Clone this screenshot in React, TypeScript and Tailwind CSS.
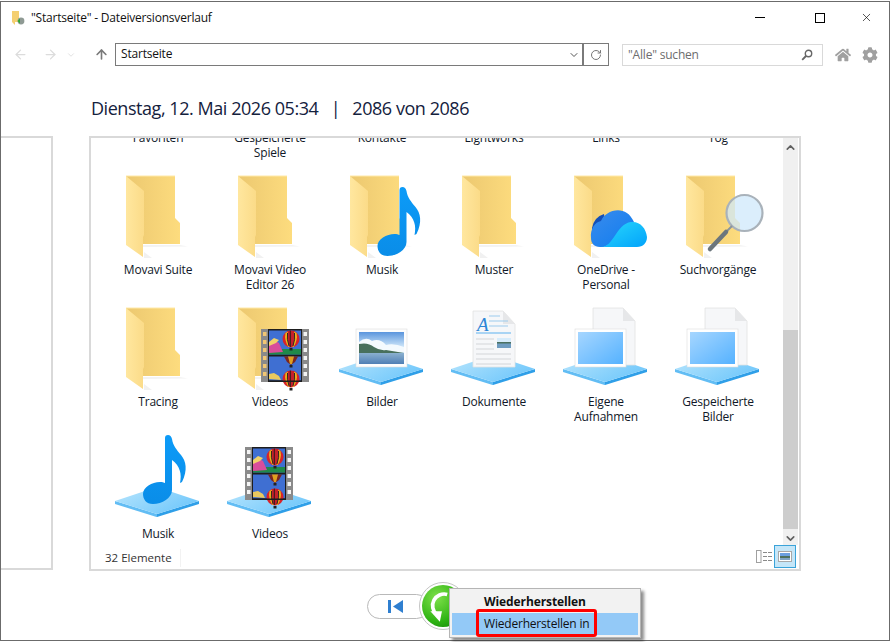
import { ArrowLeft, ArrowRight, ArrowUp, ChevronDown, ChevronUp, RotateCw, X } from "lucide-react";
import { FaCog, FaHome } from "react-icons/fa";
import type { ReactNode } from "react";

const font = "font-['Open_Sans',sans-serif]";

function SvgDefs() {
  return (
    <svg className="absolute h-0 w-0">
      <defs>
        <linearGradient id="folderBack" x1="0" x2="1" y1="0" y2="0">
          <stop offset="0" stopColor="#ecc870" />
          <stop offset="1" stopColor="#fddc7e" />
        </linearGradient>
        <linearGradient id="folderFront" x1="0" x2="1" y1="0" y2="0">
          <stop offset="0" stopColor="#ffe79f" />
          <stop offset="1" stopColor="#fbdb88" />
        </linearGradient>
        <linearGradient id="plate" x1="0" x2="1" y1="0" y2="0.6">
          <stop offset="0" stopColor="#b9e6fd" />
          <stop offset="1" stopColor="#72c8fb" />
        </linearGradient>
        <linearGradient id="note" x1="0" x2="0" y1="0" y2="1">
          <stop offset="0" stopColor="#0c9bf8" />
          <stop offset="1" stopColor="#0a8de8" />
        </linearGradient>
        <linearGradient id="tile" x1="0" x2="1" y1="0" y2="1">
          <stop offset="0" stopColor="#a6d6ff" />
          <stop offset="1" stopColor="#55b2ff" />
        </linearGradient>
        <linearGradient id="cloudMain" x1="0" x2="1" y1="0" y2="1">
          <stop offset="0" stopColor="#3a8cec" />
          <stop offset="1" stopColor="#0f7cf0" />
        </linearGradient>
        <linearGradient id="cloudRight" x1="0" x2="1" y1="0" y2="1">
          <stop offset="0" stopColor="#2ad8fb" />
          <stop offset="1" stopColor="#02a3fb" />
        </linearGradient>
        <linearGradient id="photoSky" x1="0" x2="0" y1="0" y2="1">
          <stop offset="0" stopColor="#5a95dd" />
          <stop offset="0.5" stopColor="#d7ecfb" />
          <stop offset="1" stopColor="#d7ecfb" />
        </linearGradient>
        <linearGradient id="photoWater" x1="0" x2="0" y1="0" y2="1">
          <stop offset="0" stopColor="#8bb0cf" />
          <stop offset="1" stopColor="#4f7fb5" />
        </linearGradient>
        <radialGradient id="greenBall" cx="0.35" cy="0.3" r="0.8">
          <stop offset="0" stopColor="#7fe04a" />
          <stop offset="0.7" stopColor="#2fb414" />
          <stop offset="1" stopColor="#1c900c" />
        </radialGradient>
      </defs>
    </svg>
  );
}

function Folder() {
  return (
    <>
      <path d="M33 73 L70 73 L78 74.5 L33 75Z" fill="#f3f3f3" />
      <path d="M16 4 L65 4 L65 46 L70 51 L70 72 L33 72 Z" fill="url(#folderBack)" />
      <path d="M16 4 L65 4" stroke="#ffe9a8" strokeWidth="1" />
      <path d="M16 4 L34 19 L34 63 L33 65 L33 85 L16 73 Z" fill="url(#folderFront)" />
      <path d="M34 86 L42 86 L34 80Z" fill="#f1f1f1" />
    </>
  );
}

function Plate() {
  return (
    <>
      <path d="M5 65 L47 78 L47 81 Q47 81 45 80.5 L5 68 Z" fill="#62bdf4" />
      <path d="M89 65 L47 78 L47 81 L89 68 Z" fill="#2f9fe8" />
      <path d="M5 65 L47 51 L89 65 L47 78 Z" fill="url(#plate)" />
    </>
  );
}

function Note({ dx = 0, dy = 0 }: { dx?: number; dy?: number }) {
  return (
    <path
      transform={`translate(${dx} ${dy})`}
      fill="url(#note)"
      d="M55 2 Q55 -1 58 -1 Q61 -1 62 3 C63 10 67 14 71 19 C76 25 78 34 72 46 L70 47 C72 38 70 30 62 24 L62 54 C62 62 52 68 43 68 C36 68 33 63 33 58 C33 51 42 46 50 46 C52 46 54 46.5 55 47 Z"
    />
  );
}

function Balloon({ x, y }: { x: number; y: number }) {
  return (
    <g transform={`translate(${x} ${y})`}>
      <ellipse cx="0" cy="0" rx="8.5" ry="8.5" fill="#d8232a" />
      <path d="M-5.5 -6 Q-7 1 -2.5 8 L2.5 8 Q7 1 5.5 -6 Q0 -10 -5.5 -6Z" fill="#f0b81c" />
      <path d="M-3 -8 Q-4.5 0 -1.5 8 L1.5 8 Q4.5 0 3 -8Z" fill="#c5202a" />
      <path d="M-0.7 -8.5 V8 M-3.5 -6 Q-4.5 0 -2 7 M3.5 -6 Q4.5 0 2 7" stroke="#1b1b1b" strokeWidth="0.9" fill="none" />
      <rect x="-1.5" y="9" width="3" height="2.5" fill="#222" />
    </g>
  );
}

function Film({ x, y }: { x: number; y: number }) {
  const holes = [3, 11, 19, 27, 35, 43];
  return (
    <g transform={`translate(${x} ${y})`}>
      <rect x="0" y="0" width="48" height="53" fill="#8a8a8a" />
      {holes.map((h) => (
        <g key={h}>
          <rect x="2" y={h} width="3.5" height="4" fill={x > 30 ? "#f0c674" : "#f4f4f4"} />
          <rect x="42.5" y={h} width="3.5" height="4" fill="#f4f4f4" />
        </g>
      ))}
      <rect x="7" y="0" width="34" height="53" fill="#1d1d1d" />
      <rect x="8" y="1.5" width="32" height="24" fill="#3f6fd2" />
      <rect x="8" y="20" width="32" height="5.5" fill="#1f8a4a" />
      <path d="M8 17 L13 11 L18 14 L22 23 L8 24Z" fill="#d84d9b" />
      <path d="M8 13 L13 9 L18 11 L15 14 L8 17Z" fill="#f0d26a" />
      <Balloon x={30} y={10} />
      <rect x="8" y="27.5" width="32" height="24" fill="#3f6fd2" />
      <path d="M23 27.5 L37 27.5 L34 33 L30 36 L26 33 Z" fill="#7a2620" />
      <path d="M27 27.5 L33 27.5 L31 35 L29 35Z" fill="#e0a020" />
      <rect x="28.5" y="36" width="3" height="2.5" fill="#222" />
      <path d="M8 50 L8 45 L13 44 L18 47 L20 51 Z" fill="#e9c95f" />
      <Balloon x={30} y={50} />
      <rect x="7" y="51.5" width="34" height="1.5" fill="#1d1d1d" />
    </g>
  );
}

function Photo() {
  return (
    <>
      <rect x="22" y="25" width="51" height="38" fill="#fdfdfd" stroke="#dcdcdc" strokeWidth="0.6" />
      <rect x="25" y="28" width="45" height="32" fill="url(#photoSky)" />
      <path d="M25 38 Q32 32 38 37 Q46 34 52 41 Q60 39 70 43 L70 48 L25 48Z" fill="#f4fafe" />
      <path d="M25 40 Q34 38 40 43 Q46 47 52 46 L70 49 L25 50Z" fill="#48705c" />
      <rect x="25" y="49" width="45" height="11" fill="url(#photoWater)" />
    </>
  );
}

function Page({ x, y, w, h }: { x: number; y: number; w: number; h: number }) {
  return (
    <>
      <path
        d={`M${x} ${y} L${x + w - 12} ${y} L${x + w} ${y + 13} L${x + w} ${y + h} L${x} ${y + h} Z`}
        fill="#f6f7f9"
        stroke="#e2e2e2"
        strokeWidth="0.8"
      />
      <path d={`M${x + w - 12} ${y} L${x + w - 12} ${y + 13} L${x + w} ${y + 13} Z`} fill="#e6e7e9" />
    </>
  );
}

function Tile() {
  return (
    <>
      <Page x={35} y={4} w={42} h={57} />
      <rect x="17" y="25" width="51" height="38" fill="#fff" stroke="#dcdcdc" strokeWidth="0.6" />
      <rect x="20" y="28" width="45" height="32" fill="url(#tile)" />
    </>
  );
}

function DocIcon() {
  return (
    <>
      <Page x={27} y={7} w={42} h={56} />
      <text x="31" y="27" fontFamily="'Liberation Serif',serif" fontStyle="italic" fontSize="19" fill="#2e86d6">
        A
      </text>
      <path d="M43 12 H54 M43 17 H62 M43 22 H62" stroke="#9ccbed" strokeWidth="1" />
      <rect x="30" y="28" width="35" height="2" fill="#a9d4f4" />
      <path d="M30 35 H48 M30 40 H48 M30 45 H48 M30 50 H65 M30 55 H65 M30 60 H65" stroke="#d3d5d8" strokeWidth="1" />
      <rect x="51" y="34" width="14" height="10" fill="#6f9cc0" />
      <rect x="51" y="34" width="14" height="4" fill="#d7ecfb" />
      <rect x="51" y="38" width="14" height="1.5" fill="#4b7060" />
    </>
  );
}

function Cloud() {
  return (
    <>
      <path d="M34 56 Q36 45 46 42 L48 56 L34 64 Z" fill="#1450b8" />
      <path d="M33 66 C32 57 37 50 43 49 C47 38 68 31 76 50 L62 68 L46 75 L42 75 C36 75 33 71 33 66 Z" fill="url(#cloudMain)" />
      <path d="M43 75 C56 75 58 52 73 50 C82 49 88 56 89 65 C89 71 85 75 79 75 Z" fill="url(#cloudRight)" />
    </>
  );
}

function Magnifier() {
  return (
    <>
      <circle cx="74.5" cy="41" r="18" fill="#cfe8fb" fillOpacity="0.75" stroke="#a9b2ba" strokeWidth="2.2" />
      <path d="M62 54 L56 60" stroke="#8a949b" strokeWidth="2" />
      <path d="M56 60 L40 77" stroke="#6c767d" strokeWidth="4.5" strokeLinecap="round" />
    </>
  );
}

type Item = { label: string[]; art?: ReactNode };

const folder = <Folder />;

const items: Item[] = [
  { label: ["Favoriten"] },
  { label: ["Gespeicherte", "Spiele"] },
  { label: ["Kontakte"] },
  { label: ["Lightworks"] },
  { label: ["Links"] },
  { label: ["Tog"] },
  { label: ["Movavi Suite"], art: folder },
  { label: ["Movavi Video", "Editor 26"], art: folder },
  { label: ["Musik"], art: <>{folder}<Note dx={10.5} dy={16} /></> },
  { label: ["Muster"], art: folder },
  { label: ["OneDrive -", "Personal"], art: <>{folder}<Cloud /></> },
  { label: ["Suchvorgänge"], art: <>{folder}<Magnifier /></> },
  { label: ["Tracing"], art: folder },
  { label: ["Videos"], art: <>{folder}<Film x={39} y={25} /></> },
  { label: ["Bilder"], art: <><Plate /><Photo /></> },
  { label: ["Dokumente"], art: <><Plate /><DocIcon /></> },
  { label: ["Eigene", "Aufnahmen"], art: <><Plate /><Tile /></> },
  { label: ["Gespeicherte", "Bilder"], art: <><Plate /><Tile /></> },
  { label: ["Musik"], art: <><Plate /><Note /></> },
  { label: ["Videos"], art: <><Plate /><Film x={23} y={11} /></> },
];

function GridItem({ item }: { item: Item }) {
  return (
    <div className="flex h-[132px] w-[112px] flex-col items-center">
      <svg viewBox="0 0 96 90" className="h-[90px] w-[96px] shrink-0 overflow-visible">
        {item.art}
      </svg>
      <div className="text-center text-xs leading-[15px] tracking-[-0.2px] text-[#101828]">
        {item.label.map((line) => (
          <div key={line}>{line}</div>
        ))}
      </div>
    </div>
  );
}

function Toolbar() {
  return (
    <div className="flex h-[23px] items-center">
      <div className="flex w-[114px] items-center text-[#dcdcdc]">
        <ArrowLeft size={15} strokeWidth={2} className="ml-[12px]" />
        <ArrowRight size={15} strokeWidth={2} className="ml-[15px]" />
        <ChevronDown size={10} strokeWidth={2} className="ml-[8px]" />
        <ArrowUp size={15} strokeWidth={2.6} className="ml-[18px] text-[#7a7a7a]" />
      </div>
      <div className="flex h-[23px] w-[494px] border border-[#7a7a7a]">
        <div className="flex-1 pl-[5px] text-xs leading-[20px] tracking-[-0.2px] text-[#111]">Startseite</div>
        <div className="flex w-[17px] items-center justify-center">
          <ChevronDown size={12} className="text-[#555]" />
        </div>
        <div className="flex w-[26px] items-center justify-center border-l-2 border-[#7a7a7a]">
          <RotateCw size={12} strokeWidth={2} className="text-[#777]" />
        </div>
      </div>
      <div className="ml-[13px] flex h-[22px] w-[201px] items-center justify-between border border-[#d9d9d9] pl-[5px] pr-[9px]">
        <span className="text-xs tracking-[-0.2px] text-[#6d6d6d]">"Alle" suchen</span>
        <svg viewBox="0 0 12 12" className="h-3 w-3">
          <circle cx="7.5" cy="4.5" r="3.2" fill="none" stroke="#666" strokeWidth="1.4" />
          <path d="M5 7 L1.2 10.8" stroke="#666" strokeWidth="1.8" />
        </svg>
      </div>
      <FaHome size={16} className="ml-[12px] text-[#a0a0a0]" />
      <FaCog size={16} className="ml-[11px] text-[#a0a0a0]" />
    </div>
  );
}

function TitleBar() {
  return (
    <div className="flex h-[31px] items-center">
      <svg viewBox="0 0 14 16" className="ml-[10px] h-4 w-[14px]">
        <path d="M1 1 L8 1 L8 12 L4 12 L4 15 L1 12Z" fill="#f4cf72" />
        <circle cx="10" cy="11" r="3.4" fill="#8f9a94" />
        <path d="M6.5 11 L9 8.5 L9 13.5Z" fill="#2fa82f" />
      </svg>
      <span className="ml-[6px] flex-1 text-xs tracking-[-0.2px] text-[#111]">"Startseite" - Dateiversionsverlauf</span>
      <div className="mr-[15px] h-px w-[10px] bg-black" />
      <div className="ml-[35px] h-[10px] w-[10px] border border-black" />
      <X size={13} strokeWidth={1.2} className="ml-[35px] mr-[16px] text-black" />
    </div>
  );
}

function ListPanel() {
  return (
    <div className="flex h-[435px] w-[712px] flex-col border-2 border-[#d9d9d9]">
      <div className="flex min-h-0 flex-1">
        <div className="min-w-0 flex-1 overflow-hidden pl-[11px]">
          <div className="-mt-[98px] grid grid-cols-[repeat(6,112px)]">
            {items.map((item, i) => (
              <GridItem key={i} item={item} />
            ))}
          </div>
        </div>
        <div className="mr-px flex w-[15px] flex-col items-center bg-[#f0f0f0] text-[#606060]">
          <ChevronUp size={13} strokeWidth={3} className="mt-[3px]" />
          <div className="mt-[176px] h-[199px] w-full bg-[#cdcdcd]" />
          <ChevronDown size={13} strokeWidth={3} className="mt-[3px]" />
        </div>
      </div>
      <div className="flex h-[24px] shrink-0 items-start justify-between pl-[14px] pr-[3px]">
        <span className="mt-[4px] border-r border-[#f2f2f2] pr-[8px] text-[11.5px] leading-[18px] text-[#333]">32 Elemente</span>
        <div className="flex items-center">
          <svg viewBox="0 0 17 13" className="h-[13px] w-[17px]">
            <rect x="0.5" y="0.5" width="4.5" height="12" fill="none" stroke="#a0a0a0" />
            <path d="M7 2.5 H16 M7 6.5 H16 M7 10.5 H16" stroke="#8a8a8a" strokeDasharray="4 1" />
          </svg>
          <div className="ml-[1px] flex h-[23px] w-[22px] items-center justify-center border border-[#3aa3d9] bg-[#c5e6f8]">
            <svg viewBox="0 0 14 11" className="h-[11px] w-[14px]">
              <rect x="0.5" y="0.5" width="13" height="10" fill="#fff" stroke="#a8a8a8" />
              <rect x="2" y="2" width="10" height="3" fill="#6b9fe0" />
              <rect x="2" y="5" width="10" height="2" fill="#4e705e" />
              <rect x="2" y="7" width="10" height="2" fill="#7fa3c4" />
            </svg>
          </div>
        </div>
      </div>
    </div>
  );
}

function BottomControls() {
  return (
    <div className="relative flex items-center pl-[366px] pt-[12px]">
      <div className="flex h-[25px] w-[62px] items-center rounded-full border border-[#b9b9b9] bg-white pl-[20px]">
        <svg viewBox="0 0 15 13" className="h-[13px] w-[15px]">
          <rect x="0" y="0" width="3" height="13" fill="#2f7fd0" />
          <path d="M15 0 V13 L5 6.5Z" fill="#2f7fd0" />
        </svg>
      </div>
      <div className="-ml-[10px] -mt-[1px] h-[48px] w-[48px] rounded-full border border-[#c4c4c4] bg-white p-[2px]">
        <svg viewBox="0 0 40 40" className="h-full w-full">
          <circle cx="20" cy="20" r="20" fill="url(#greenBall)" />
          <path d="M24 9 A11 11 0 0 0 14 28" fill="none" stroke="#fff" strokeWidth="3.5" />
          <path d="M8 25 L19 25 L17 35Z" fill="#fff" />
        </svg>
      </div>
      <div className="absolute left-[448px] top-[17px] h-[50px] w-[192px] border border-[#b5b5b5] bg-[#f2f2f2] p-[2px] shadow-[3px_3px_3px_rgba(0,0,0,0.45)]">
        <div className="flex h-[22px] items-center pl-[32px] text-xs font-bold tracking-[-0.1px] text-[#111]">Wiederherstellen</div>
        <div className="flex h-[22px] items-center bg-[#93c9f7] pl-[32px] text-xs tracking-[-0.2px] text-[#111]">Wiederherstellen in</div>
        <div className="absolute left-[26px] top-[20px] h-[28px] w-[121px] rounded-[3px] border-[3px] border-[#f00]" />
      </div>
    </div>
  );
}

export default function App() {
  return (
    <div className={`h-[642px] w-[891px] overflow-hidden bg-white pr-px pt-px ${font}`}>
      <SvgDefs />
      <div className="h-[640px] w-[890px] border border-[#6b6b6b] bg-white">
        <TitleBar />
        <div className="mt-[10px]">
          <Toolbar />
        </div>
        <div className="ml-[90px] mt-[30px] text-lg leading-[24px] tracking-[-0.45px] text-[#14213d]">
          Dienstag, 12. Mai 2026 05:34 <span className="mx-[8px]">|</span> 2086 von 2086
        </div>
        <div className="mt-[16px] flex items-start gap-[36px]">
          <div className="h-[434px] w-[52px] shrink-0 border-y-2 border-r-2 border-[#d9d9d9]" />
          <ListPanel />
        </div>
        <BottomControls />
      </div>
    </div>
  );
}
